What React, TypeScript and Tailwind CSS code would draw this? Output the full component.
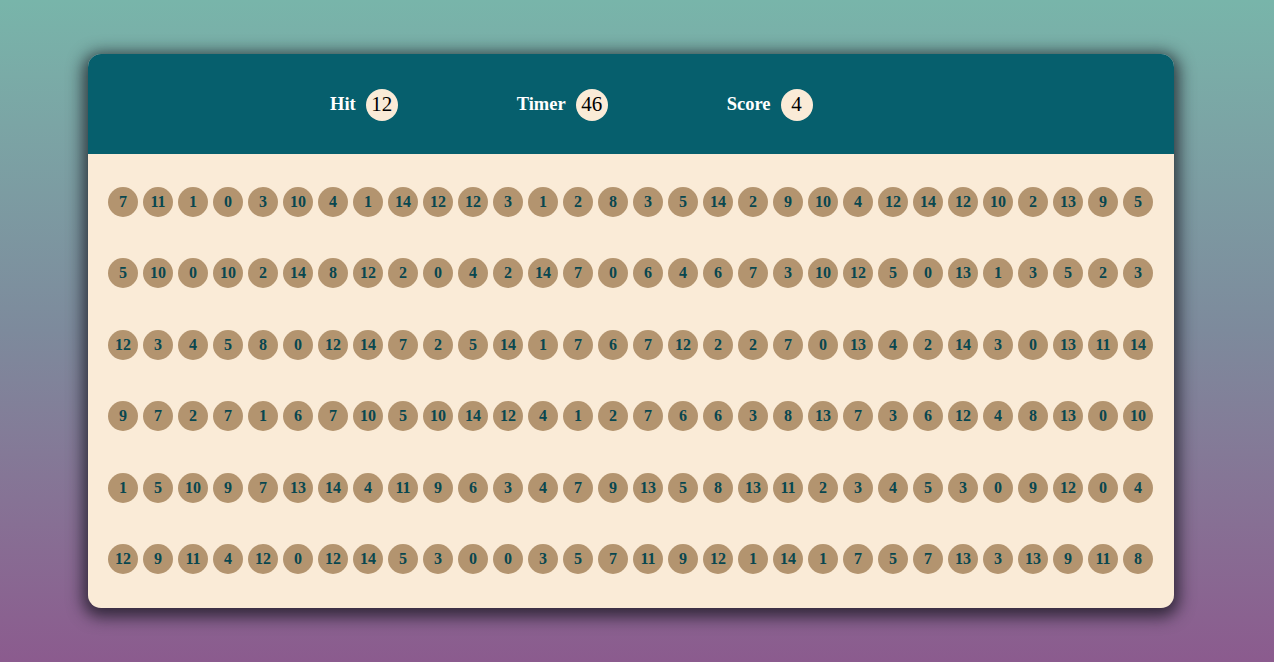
const rows: number[][] = [
  [7, 11, 1, 0, 3, 10, 4, 1, 14, 12, 12, 3, 1, 2, 8, 3, 5, 14, 2, 9, 10, 4, 12, 14, 12, 10, 2, 13, 9, 5],
  [5, 10, 0, 10, 2, 14, 8, 12, 2, 0, 4, 2, 14, 7, 0, 6, 4, 6, 7, 3, 10, 12, 5, 0, 13, 1, 3, 5, 2, 3],
  [12, 3, 4, 5, 8, 0, 12, 14, 7, 2, 5, 14, 1, 7, 6, 7, 12, 2, 2, 7, 0, 13, 4, 2, 14, 3, 0, 13, 11, 14],
  [9, 7, 2, 7, 1, 6, 7, 10, 5, 10, 14, 12, 4, 1, 2, 7, 6, 6, 3, 8, 13, 7, 3, 6, 12, 4, 8, 13, 0, 10],
  [1, 5, 10, 9, 7, 13, 14, 4, 11, 9, 6, 3, 4, 7, 9, 13, 5, 8, 13, 11, 2, 3, 4, 5, 3, 0, 9, 12, 0, 4],
  [12, 9, 11, 4, 12, 0, 12, 14, 5, 3, 0, 0, 3, 5, 7, 11, 9, 12, 1, 14, 1, 7, 5, 7, 13, 3, 13, 9, 11, 8],
];

function Stat({ label, value }: { label: string; value: number }) {
  return (
    <div className="flex items-center gap-[10px]">
      <span className="text-[18.5px] font-bold text-white">{label}</span>
      <span className="flex size-8 items-center justify-center rounded-full bg-[#faebd7] text-[21px] text-black">
        {value}
      </span>
    </div>
  );
}

export default function App() {
  return (
    <div
      className="min-h-screen w-full bg-gradient-to-b from-[#78b5aa] via-[#7d8a9c] to-[#8b5b8e] pt-[54px] pl-[88px]"
      style={{ fontFamily: '"Liberation Serif", "Times New Roman", serif' }}
    >
      <div className="flex h-[554px] w-[1086px] flex-col overflow-hidden rounded-[13px] bg-[#faebd7] shadow-[0_4px_16px_5px_rgba(20,20,30,0.75)]">
        <div className="flex h-[100px] items-center gap-[119px] bg-[#065f6d] pt-[2px] pl-[242px]">
          <Stat label="Hit" value={12} />
          <Stat label="Timer" value={46} />
          <Stat label="Score" value={4} />
        </div>
        <div className="flex flex-col gap-y-[41.4px] pt-[33px] pl-[20px]">
          {rows.map((row, i) => (
            <div key={i} className="flex gap-[5px]">
              {row.map((n, j) => (
                <div
                  key={j}
                  className="flex size-[30px] items-center justify-center rounded-full bg-[#b3946f] text-[16px] font-bold text-[#08474f]"
                >
                  {n}
                </div>
              ))}
            </div>
          ))}
        </div>
      </div>
    </div>
  );
}
